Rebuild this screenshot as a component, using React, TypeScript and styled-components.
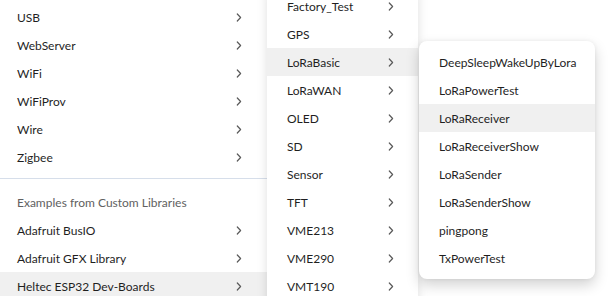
import React from "react";
import styled, { createGlobalStyle } from "styled-components";

const Global = createGlobalStyle`
  html, body { margin: 0; padding: 0; background: #ffffff; overflow: hidden; }
  body { font-family: Lato, "Noto Sans", sans-serif; }
`;

const Stage = styled.div`
  position: relative;
  width: 615px;
  height: 296px;
  overflow: hidden;
  display: flex;
  align-items: flex-start;
  background: #ffffff;
`;

const Menu = styled.div<{ $w: number; $top: number; $padX: number }>`
  width: ${(p) => p.$w}px;
  margin-top: ${(p) => p.$top}px;
  background: #ffffff;
  display: flex;
  flex-direction: column;
  flex-shrink: 0;
  --pad-x: ${(p) => p.$padX}px;
`;

const SubMenu = styled(Menu)`
  position: relative;
  z-index: 1;
  min-height: 330px;
  box-shadow: 0 0 10px rgba(0, 0, 0, 0.13);
`;

const Popup = styled.div`
  position: absolute;
  left: 419px;
  top: 41px;
  width: 176px;
  padding: 7px 0;
  background: #ffffff;
  border-radius: 8px;
  box-shadow: 0 6px 14px rgba(0, 0, 0, 0.18), 0 0 4px rgba(0, 0, 0, 0.06);
  z-index: 2;
  display: flex;
  flex-direction: column;
  --pad-x: 20px;
`;

const Row = styled.div<{ $active?: boolean; $chevRight?: number }>`
  height: 28px;
  display: flex;
  align-items: center;
  justify-content: space-between;
  padding: 0 ${(p) => p.$chevRight ?? 0}px 0 var(--pad-x);
  background: ${(p) => (p.$active ? "#f0f0f0" : "transparent")};
  color: #1f1f1f;
  font-size: 12px;
  white-space: nowrap;
`;

const Header = styled.div`
  height: 28px;
  display: flex;
  align-items: center;
  padding-left: var(--pad-x);
  color: #616161;
  font-size: 12px;
  white-space: nowrap;
`;

const Divider = styled.div`
  height: 1px;
  background: #d6deea;
  margin: 7px 0 9px;
`;

const Chevron = () => (
  <svg width="6" height="9" viewBox="0 0 6 9" fill="none">
    <path d="M1.3 1 L4.6 4.5 L1.3 8" stroke="#5a5a5a" strokeWidth="1.2" strokeLinecap="round" strokeLinejoin="round" />
  </svg>
);

const menu1Top = ["USB", "WebServer", "WiFi", "WiFiProv", "Wire", "Zigbee"];
const menu1Bottom = ["Adafruit BusIO", "Adafruit GFX Library", "Heltec ESP32 Dev-Boards"];
const menu2 = [
  "Factory_Test",
  "GPS",
  "LoRaBasic",
  "LoRaWAN",
  "OLED",
  "SD",
  "Sensor",
  "TFT",
  "VME213",
  "VME290",
  "VMT190",
];
const menu3 = [
  "DeepSleepWakeUpByLora",
  "LoRaPowerTest",
  "LoRaReceiver",
  "LoRaReceiverShow",
  "LoRaSender",
  "LoRaSenderShow",
  "pingpong",
  "TxPowerTest",
];

export default function App() {
  return (
    <>
      <Global />
      <Stage>
        <Menu $w={267} $top={3} $padX={17}>
          {menu1Top.map((t) => (
            <Row key={t} $chevRight={25}>
              {t}
              <Chevron />
            </Row>
          ))}
          <Divider />
          <Header>Examples from Custom Libraries</Header>
          {menu1Bottom.map((t) => (
            <Row key={t} $chevRight={25} $active={t.startsWith("Heltec")}>
              {t}
              <Chevron />
            </Row>
          ))}
        </Menu>
        <SubMenu $w={151} $top={-8} $padX={20}>
          {menu2.map((t) => (
            <Row key={t} $chevRight={24} $active={t === "LoRaBasic"}>
              {t}
              <Chevron />
            </Row>
          ))}
        </SubMenu>
        <Popup>
          {menu3.map((t) => (
            <Row key={t} $active={t === "LoRaReceiver"}>
              {t}
            </Row>
          ))}
        </Popup>
      </Stage>
    </>
  );
}
